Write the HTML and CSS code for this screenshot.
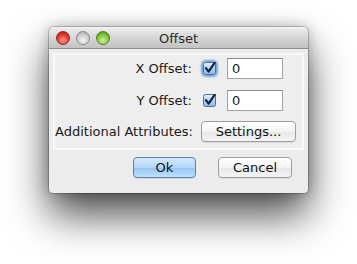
FILE: index.html
```html
<!DOCTYPE html>
<html lang="en">
<head>
  <meta charset="UTF-8">
  <title>Offset</title>
  <link rel="stylesheet" href="styles.css">
</head>
<body>
  <div class="stage">
    <div class="window">
      <div class="titlebar">
        <div class="lights">
          <span class="light red"></span>
          <span class="light gray"></span>
          <span class="light green"></span>
        </div>
        <div class="title">Offset</div>
      </div>

      <div class="panel">
        <div class="label">X Offset:</div>
        <div class="controls">
          <span class="check focus">
            <svg width="13" height="13" viewBox="0 0 13 13"><use href="#box"/></svg>
          </span>
          <div class="field">0</div>
        </div>

        <div class="label">Y Offset:</div>
        <div class="controls">
          <span class="check">
            <svg width="13" height="13" viewBox="0 0 13 13"><use href="#box"/></svg>
          </span>
          <div class="field">0</div>
        </div>

        <div class="label">Additional Attributes:</div>
        <div class="controls">
          <button class="btn settings">Settings...</button>
        </div>
      </div>

      <div class="actions">
        <button class="btn ok">Ok</button>
        <button class="btn cancel">Cancel</button>
      </div>
    </div>

    <svg width="0" height="0" class="defs">
      <defs>
        <linearGradient id="boxfill" x1="0" y1="0" x2="0" y2="1">
          <stop offset="0" stop-color="#e4f0fc"/>
          <stop offset="0.5" stop-color="#b3d3f3"/>
          <stop offset="1" stop-color="#86b9ec"/>
        </linearGradient>
        <g id="box">
          <rect x="0.5" y="0.5" width="12" height="12" rx="2" fill="url(#boxfill)" stroke="#4f6f96"/>
          <path d="M3 6.2 L5.6 9.6 L11.8 0.6" fill="none" stroke="#14233d" stroke-width="2.2" stroke-linecap="round" stroke-linejoin="round"/>
        </g>
      </defs>
    </svg>
  </div>
</body>
</html>
```

FILE: styles.css
```css
body {
  margin: 0;
  background-color: #ffffff;
  font-family: "DejaVu Sans", "Liberation Sans", sans-serif;
  font-size: 13px;
  color: #1a1a1a;
}
.stage {
  height: 264px;
  box-sizing: border-box;
  padding: 27px 0 0 49px;
  overflow: hidden;
}
.window {
  width: 259px;
  height: 166px;
  box-sizing: border-box;
  background-color: #ececec;
  border-radius: 5px 5px 4px 4px;
  box-shadow: 0 0 0 1px rgba(0, 0, 0, 0.2), 0 0 14px rgba(0, 0, 0, 0.25), 0 22px 42px rgba(0, 0, 0, 0.7);
  overflow: hidden;
}
.titlebar {
  height: 22px;
  box-sizing: border-box;
  display: flex;
  align-items: center;
  position: relative;
  background: linear-gradient(#ececec, #d6d6d6 50%, #c2c2c2);
  border-bottom: 1px solid #8f8f8f;
  border-top: 1px solid #f6f6f6;
}
.lights {
  display: flex;
  gap: 6px;
  padding-left: 7px;
}
.light {
  width: 14px;
  height: 14px;
  border-radius: 50%;
  box-sizing: border-box;
}
.red {
  background: radial-gradient(circle at 50% 70%, #f99a8c, #e4382b 55%, #a3170f);
  border: 1px solid #8f2a22;
}
.gray {
  background: radial-gradient(circle at 50% 70%, #f4f4f4, #cdcdcd 55%, #9c9c9c);
  border: 1px solid #8a8a8a;
}
.green {
  background: radial-gradient(circle at 50% 70%, #d4f29f, #7ec43b 55%, #3f8a16);
  border: 1px solid #4d7f27;
}
.title {
  position: absolute;
  left: 0;
  right: 0;
  text-align: center;
  color: #2a2a2a;
  pointer-events: none;
}
.panel {
  margin: 4px 4px 0 4px;
  height: 97px;
  box-sizing: border-box;
  border: 2px solid #f9f9f9;
  background-color: #eeeeee;
  display: grid;
  grid-template-columns: 137px auto;
  grid-template-rows: 21px 22px 21px;
  column-gap: 9px;
  row-gap: 10px;
  padding-top: 3px;
}
.label {
  text-align: right;
  align-self: center;
  white-space: nowrap;
}
.controls {
  display: flex;
  align-items: center;
}
.check {
  display: flex;
  width: 13px;
  height: 13px;
  margin: 0 11px 0 2px;
  border-radius: 3px;
}
.check.focus {
  box-shadow: 0 0 2px 2px rgba(80, 140, 215, 0.75);
}
.field {
  width: 56px;
  height: 21px;
  box-sizing: border-box;
  background-color: #ffffff;
  border: 1px solid #a3a3a3;
  border-top-color: #8a8a8a;
  padding: 2px 0 0 4px;
  line-height: 16px;
}
.btn {
  font-family: "DejaVu Sans", "Liberation Sans", sans-serif;
  font-size: 13px;
  color: #111111;
  height: 21px;
  padding: 0;
  border: 1px solid #9e9e9e;
  border-radius: 4px;
  background: linear-gradient(#ffffff, #f3f3f3 50%, #e6e6e6 51%, #f4f4f4);
  box-shadow: 0 1px 0 rgba(0, 0, 0, 0.08);
}
.settings {
  width: 95px;
}
.actions {
  display: flex;
  justify-content: flex-end;
  gap: 22px;
  padding: 7px 16px 0 0;
}
.ok {
  width: 63px;
  border-color: #5b7fb0;
  background: linear-gradient(#d6e9fc, #b3d6f8 50%, #93c5f4 51%, #bfe0fc);
}
.cancel {
  width: 74px;
}
.defs {
  position: absolute;
}
```
